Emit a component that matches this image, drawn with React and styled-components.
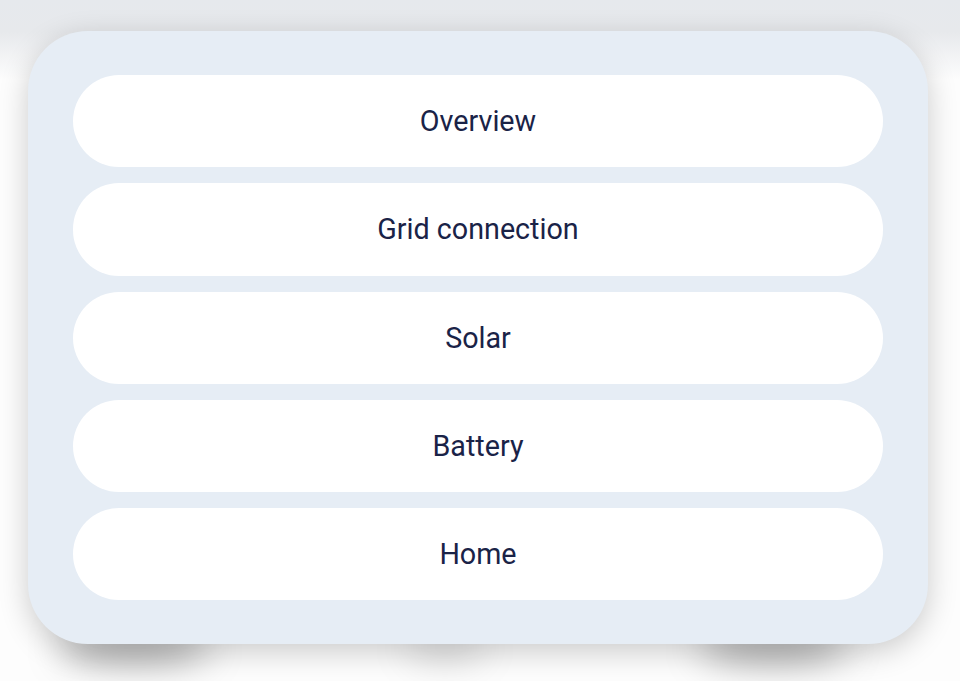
import React from 'react';
import styled, { createGlobalStyle } from 'styled-components';

const items = ['Overview', 'Grid connection', 'Solar', 'Battery', 'Home'];

const App = () => (
  <>
    <GlobalStyle />
    <Page>
      <Backdrop />
      <Blob $left="60px" $width="150px" />
      <Blob $left="405px" $width="80px" $faint />
      <Blob $left="698px" $width="150px" />
      <Card>
        {items.map((label) => (
          <NavButton key={label} type="button">
            {label}
          </NavButton>
        ))}
      </Card>
    </Page>
  </>
);

export default App;

const GlobalStyle = createGlobalStyle`
  html {
    background: #fdfdfd;
  }
  body {
    margin: 0;
    font-family: Roboto, "Noto Sans", sans-serif;
  }
`;

const Page = styled.div`
  position: relative;
  height: 681px;
  box-sizing: border-box;
  padding: 31px 32px 0 28px;
  overflow: hidden;
`;

const Backdrop = styled.div`
  position: absolute;
  top: 0;
  left: 0;
  right: 0;
  height: 80px;
  background: linear-gradient(180deg, #e6e9ed 0%, #e7e9ec 40%, rgba(240, 242, 245, 0) 100%);
`;

const Blob = styled.div`
  position: absolute;
  top: 630px;
  left: ${(p) => p.$left};
  width: ${(p) => p.$width};
  height: 34px;
  border-radius: 50%;
  background: rgba(0, 0, 0, ${(p) => (p.$faint ? 0.12 : 0.32)});
  filter: blur(18px);
`;

const Card = styled.div`
  position: relative;
  display: flex;
  flex-direction: column;
  gap: 16px;
  width: 900px;
  box-sizing: border-box;
  padding: 44px 45px 44px;
  background: #e6edf5;
  border-radius: 60px;
  box-shadow: 0 8px 30px rgba(0, 0, 0, 0.2);
`;

const NavButton = styled.button`
  display: flex;
  align-items: center;
  justify-content: center;
  height: 92.25px;
  padding: 0;
  border: none;
  border-radius: 46px;
  background: #ffffff;
  color: #1a2347;
  font-family: Roboto, "Noto Sans", sans-serif;
  font-size: 28.7px;
  font-weight: 400;
  cursor: pointer;
`;
